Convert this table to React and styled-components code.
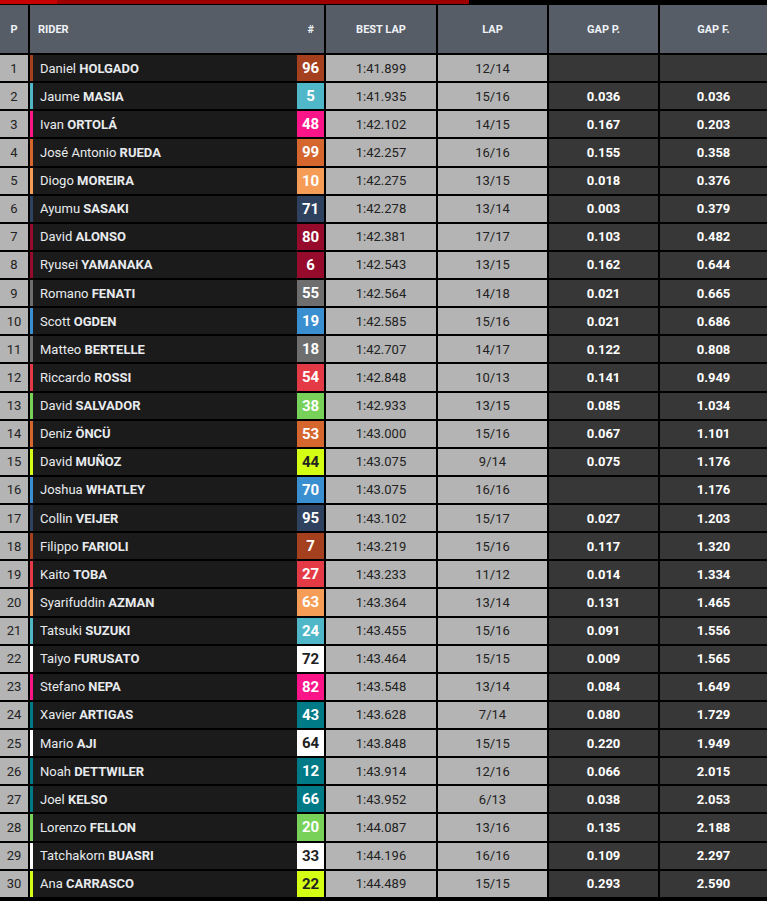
import React from 'react';
import styled, { createGlobalStyle } from 'styled-components';

const GlobalStyle = createGlobalStyle`
    body {
        margin: 0;
        background: #000;
        font-family: Roboto, 'Liberation Sans', sans-serif;
    }
`

const riders = [
    ['Daniel', 'HOLGADO', 96, '#a5401f', '1:41.899', '12/14', '', ''],
    ['Jaume', 'MASIA', 5, '#4fb7c7', '1:41.935', '15/16', '0.036', '0.036'],
    ['Ivan', 'ORTOLÁ', 48, '#fb1589', '1:42.102', '14/15', '0.167', '0.203'],
    ['José Antonio', 'RUEDA', 99, '#d4662e', '1:42.257', '16/16', '0.155', '0.358'],
    ['Diogo', 'MOREIRA', 10, '#f59d57', '1:42.275', '13/15', '0.018', '0.376'],
    ['Ayumu', 'SASAKI', 71, '#2e415e', '1:42.278', '13/14', '0.003', '0.379'],
    ['David', 'ALONSO', 80, '#960a2b', '1:42.381', '17/17', '0.103', '0.482'],
    ['Ryusei', 'YAMANAKA', 6, '#960a2b', '1:42.543', '13/15', '0.162', '0.644'],
    ['Romano', 'FENATI', 55, '#6e6e6e', '1:42.564', '14/18', '0.021', '0.665'],
    ['Scott', 'OGDEN', 19, '#3a8fd0', '1:42.585', '15/16', '0.021', '0.686'],
    ['Matteo', 'BERTELLE', 18, '#6e6e6e', '1:42.707', '14/17', '0.122', '0.808'],
    ['Riccardo', 'ROSSI', 54, '#e43a45', '1:42.848', '10/13', '0.141', '0.949'],
    ['David', 'SALVADOR', 38, '#78d25a', '1:42.933', '13/15', '0.085', '1.034'],
    ['Deniz', 'ÖNCÜ', 53, '#d4662e', '1:43.000', '15/16', '0.067', '1.101'],
    ['David', 'MUÑOZ', 44, '#d4ff14', '1:43.075', '9/14', '0.075', '1.176', true],
    ['Joshua', 'WHATLEY', 70, '#3a8fd0', '1:43.075', '16/16', '', '1.176'],
    ['Collin', 'VEIJER', 95, '#2e415e', '1:43.102', '15/17', '0.027', '1.203'],
    ['Filippo', 'FARIOLI', 7, '#a5401f', '1:43.219', '15/16', '0.117', '1.320'],
    ['Kaito', 'TOBA', 27, '#e43a45', '1:43.233', '11/12', '0.014', '1.334'],
    ['Syarifuddin', 'AZMAN', 63, '#f59d57', '1:43.364', '13/14', '0.131', '1.465'],
    ['Tatsuki', 'SUZUKI', 24, '#4fb7c7', '1:43.455', '15/16', '0.091', '1.556'],
    ['Taiyo', 'FURUSATO', 72, '#ffffff', '1:43.464', '15/15', '0.009', '1.565', true],
    ['Stefano', 'NEPA', 82, '#fb1589', '1:43.548', '13/14', '0.084', '1.649'],
    ['Xavier', 'ARTIGAS', 43, '#007a87', '1:43.628', '7/14', '0.080', '1.729'],
    ['Mario', 'AJI', 64, '#ffffff', '1:43.848', '15/15', '0.220', '1.949', true],
    ['Noah', 'DETTWILER', 12, '#007a87', '1:43.914', '12/16', '0.066', '2.015'],
    ['Joel', 'KELSO', 66, '#007a87', '1:43.952', '6/13', '0.038', '2.053'],
    ['Lorenzo', 'FELLON', 20, '#78d25a', '1:44.087', '13/16', '0.135', '2.188'],
    ['Tatchakorn', 'BUASRI', 33, '#ffffff', '1:44.196', '16/16', '0.109', '2.297', true],
    ['Ana', 'CARRASCO', 22, '#d4ff14', '1:44.489', '15/15', '0.293', '2.590', true],
];

const Progress = styled.div`
    width: 469px;
    height: 4px;
    margin-bottom: 1px;
    background: linear-gradient(to right, #c80000 0, #c80000 57px, #9e0000 57px);
`

const Grid = styled.div`
    display: grid;
    grid-template-columns: 28px 294px 110px 109px 109px 1fr;
    column-gap: 2px;
    row-gap: 2px;
`

const Head = styled.div`
    height: 48px;
    background: #565d66;
    color: #eef2f6;
    font-size: 11px;
    font-weight: 700;
    display: flex;
    align-items: center;
    justify-content: ${p => p.$left ? 'space-between' : 'center'};
    padding: ${p => p.$left ? '0 10px 0 8px' : '0'};
`

const Pos = styled.div`
    height: 26.14px;
    background: #b4b4b4;
    color: #222;
    font-size: 13px;
    display: flex;
    align-items: center;
    justify-content: center;
`

const RiderCell = styled.div`
    height: 26.14px;
    background: #1b1b1b;
    border-left: 3px solid ${p => p.$color};
    display: flex;
    align-items: center;
    color: #e8ebee;
    font-size: 13px;
`

const Name = styled.span`
    flex: 1;
    padding-left: 7px;

    b {
        font-weight: 700;
    }
`

const Badge = styled.span`
    width: 27px;
    height: 100%;
    display: flex;
    align-items: center;
    justify-content: center;
    background: ${p => p.$color};
    color: ${p => p.$dark ? '#222' : '#fff'};
    font-size: 15px;
    font-weight: 700;
`

const Light = styled.div`
    height: 26.14px;
    background: #b4b4b4;
    color: #222;
    font-size: 13px;
    display: flex;
    align-items: center;
    justify-content: center;
`

const Gap = styled.div`
    height: 26.14px;
    background: #373737;
    color: #fff;
    font-size: 13px;
    font-weight: 700;
    display: flex;
    align-items: center;
    justify-content: center;
`

const App = () => (
    <React.Fragment>
        <GlobalStyle />
        <Progress />
        <Grid>
            <Head>P</Head>
            <Head $left><span>RIDER</span><span>#</span></Head>
            <Head>BEST LAP</Head>
            <Head>LAP</Head>
            <Head>GAP P.</Head>
            <Head>GAP F.</Head>
            {riders.map((r, i) => (
                <React.Fragment key={r[2]}>
                    <Pos>{i + 1}</Pos>
                    <RiderCell $color={r[3]}>
                        <Name>{r[0]} <b>{r[1]}</b></Name>
                        <Badge $color={r[3]} $dark={r[8]}>{r[2]}</Badge>
                    </RiderCell>
                    <Light>{r[4]}</Light>
                    <Light>{r[5]}</Light>
                    <Gap>{r[6]}</Gap>
                    <Gap>{r[7]}</Gap>
                </React.Fragment>
            ))}
        </Grid>
    </React.Fragment>
);

export default App;
